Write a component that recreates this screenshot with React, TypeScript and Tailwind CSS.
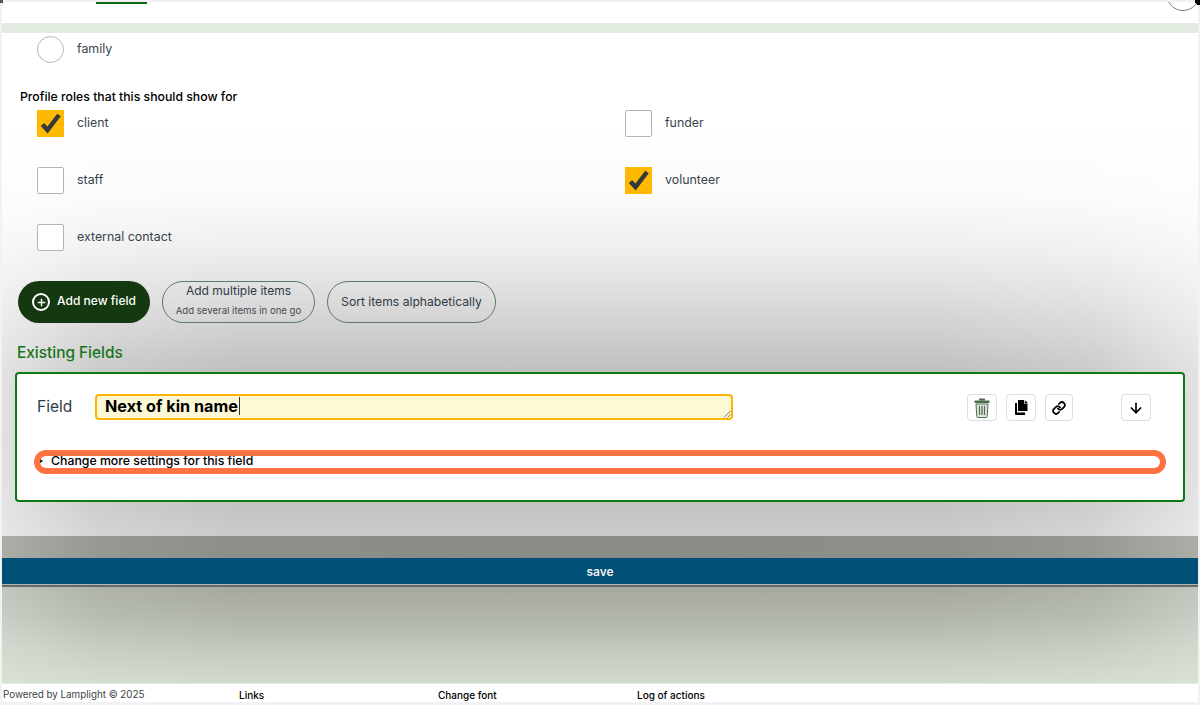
import React from 'react';
import { ArrowDown, Link, Plus } from 'lucide-react';

const TrashIcon = () => (
  <svg width="16" height="20" viewBox="0 0 16 20" fill="none">
    <rect x="5" y="0.5" width="6" height="2" fill="#4d6b4d" />
    <rect x="0.5" y="2.5" width="15" height="2.5" rx="0.5" fill="#4d6b4d" />
    <path d="M2 6h12l-0.8 12.5a1 1 0 0 1-1 1H3.800a1 1 0 0 1-1-1z" fill="#dfe6df" stroke="#4d6b4d" strokeWidth="1" />
    <path d="M5.500 8v9M8 8v9M10.500 8v9" stroke="#4d6b4d" strokeWidth="1.2" />
  </svg>
);

const CopyIcon = () => (
  <svg width="13" height="15" viewBox="0 0 13 15" fill="#000">
    <path d="M3 0h6v3.500h3.500V11H3z" />
    <path d="M9.800 0.200L12.800 3H9.800z" />
    <path d="M0 3h2v9.500h8V15H1a1 1 0 0 1-1-1z" />
  </svg>
);

const CheckMark = () => (
  <svg width="27" height="27" viewBox="0 0 27 27" fill="none">
    <path d="M5.500 14.500l5 5.500L22 5" stroke="#33383d" strokeWidth="4.500" />
  </svg>
);

function Choice({ label, checked, round }: { label: string; checked?: boolean; round?: boolean }) {
  return (
    <div className="flex h-[27px] items-center gap-[13px]">
      {checked ? (
        <span className="h-[27px] w-[27px] bg-[#ffb900]">
          <CheckMark />
        </span>
      ) : (
        <span className={`h-[27px] w-[27px] border border-[#b5b5b5] bg-white ${round ? 'rounded-full' : 'rounded-[2px]'}`} />
      )}
      <span className="text-[12.4px] text-[#39434d]">{label}</span>
    </div>
  );
}

function IconButton({ className, children }: { className: string; children: React.ReactNode }) {
  return (
    <button className={`flex h-[27px] items-center justify-center rounded-[4px] border border-[#dddddd] bg-white ${className}`}>
      {children}
    </button>
  );
}

export default function App() {
  return (
    <div className="relative h-[705px] overflow-hidden bg-[#f1f1f6] px-[2px] pt-[2px] font-['Inter',sans-serif] text-black">
      {/* Screenshot corners */}
      <span className="absolute right-0 top-0 h-[5px] w-[5px] bg-black" />
      <span className="absolute left-0 top-0 h-[3px] w-[3px] bg-[#555555]" />

      {/* Top bar */}
      <div className="relative h-[21px] overflow-hidden rounded-t-[6px] bg-white">
        <div className="ml-[94px] h-[2px] w-[51px] bg-[#0a6e0a]" />
        <div className="absolute right-[-2px] top-[-25px] h-[34px] w-[34px] rounded-full border border-[#6d8a75] bg-white" />
      </div>
      <div className="h-[10px] bg-[#e3ece0]" />

      {/* Form area */}
      <div className="h-[503px] bg-[linear-gradient(to_right,rgba(255,255,255,0.55)_0%,rgba(255,255,255,0.18)_8%,rgba(255,255,255,0)_20%,rgba(255,255,255,0)_78%,rgba(255,255,255,0.18)_91%,rgba(255,255,255,0.55)_100%),linear-gradient(to_bottom,#ffffff_0%,#ffffff_19%,#fafafa_33%,#eeeeee_43%,#dcdcdc_53%,#cccccc_61%,#c0c0c0_67%,#bababa_81%,#c3c3c3_94%,#cbcbcb_100%)] pt-[3px]">
        <div className="pl-[35px]">
          <Choice label="family" round />
        </div>
        <div className="mt-[27px] pl-[18px] text-[12.25px] font-medium leading-[14px]">Profile roles that this should show for</div>
        <div className="mt-[6px] grid w-[1161px] grid-cols-[588px_1fr] gap-y-[30px] pl-[35px]">
          <Choice label="client" checked />
          <Choice label="funder" />
          <Choice label="staff" />
          <Choice label="volunteer" checked />
          <Choice label="external contact" />
        </div>

        {/* Actions */}
        <div className="mt-[30px] flex gap-3 pl-[16px]">
          <button className="flex h-[42px] w-[132px] items-center justify-center gap-[7px] rounded-[21px] bg-[#14380f] text-[12px] font-medium text-white">
            <span className="flex h-[18px] w-[18px] items-center justify-center rounded-full border-2 border-white">
              <Plus size={11} strokeWidth={3} />
            </span>
            <span className="mt-[-3px]">Add new field</span>
          </button>
          <button className="flex h-[42px] w-[153px] flex-col items-center rounded-[21px] border border-[#5f7a65] text-[#2f3a45]">
            <span className="text-[12px] leading-[18px]">Add multiple items</span>
            <span className="mt-[4px] text-[9.6px] leading-[14px] text-[#444b52]">Add several items in one go</span>
          </button>
          <button className="h-[42px] w-[169px] rounded-[21px] border border-[#5f7a65] text-[12.15px] text-[#2f3a45]">
            Sort items alphabetically
          </button>
        </div>

        <h2 className="mt-[21px] pl-[15px] text-[15.4px] font-medium leading-[18px] text-[#17751a]">Existing Fields</h2>

        {/* Field card */}
        <div className="relative ml-[13px] mt-[10px] h-[130px] w-[1170px] rounded-[4px] border-2 border-[#0f7a0f] bg-white">
          <div className="flex items-start pt-[20px]">
            <span className="ml-[20px] w-[58px] pt-[3px] text-[15.5px] leading-[20px] text-[#2f3a45]">Field</span>
            <div className="relative flex h-[26px] w-[638px] items-center rounded-[4px] border-2 border-[#ffb400] bg-[#fdf8d5] pb-[2px] pl-[8px] text-[16.2px] font-bold leading-none">
              Next of kin name<span className="ml-[1px] h-[18px] w-px bg-[#333]" />
              <svg width="8" height="8" viewBox="0 0 8 8" className="absolute bottom-0 right-0">
                <path d="M7.500 1L1 7.500M7.500 4.500L4.500 7.500" stroke="#777" strokeWidth="1" />
              </svg>
            </div>
            <IconButton className="ml-[234px] w-[30px]"><TrashIcon /></IconButton>
            <IconButton className="ml-[9px] w-[30px]"><CopyIcon /></IconButton>
            <IconButton className="ml-[9px] w-[28px]"><Link size={14} strokeWidth={3} /></IconButton>
            <IconButton className="ml-[48px] w-[30px]"><ArrowDown size={16} strokeWidth={2.5} /></IconButton>
          </div>
          <div className="mt-[33px] flex items-center pl-[23px] text-[12.3px] font-medium leading-[14px]">
            <span className="mr-[8px] h-0 w-0 border-y-[2px] border-l-[3px] border-y-transparent border-l-black" />
            Change more settings for this field
          </div>
          {/* Highlight ring */}
          <div className="absolute left-[17px] top-[76px] h-[24px] w-[1132px] rounded-full border-[6px] border-[#ff7343]" />
        </div>
      </div>

      {/* Save */}
      <div className="h-[22px] bg-[linear-gradient(to_right,#abaea6_0%,#969991_8%,#8c8f88_20%,#8a8d86_50%,#8c8f88_78%,#969991_91%,#abaea6_100%)]" />
      <div className="flex h-[26px] items-center justify-center bg-[#004f76] pt-[1px] text-[12px] font-semibold text-[#eeeeee]">save</div>
      <div className="h-[1px] bg-[#b4b8b4]" />
      <div className="h-[2px] bg-[#666a66]" />

      {/* Lower band */}
      <div className="h-[96px] bg-[linear-gradient(to_right,rgba(227,236,224,0.45)_0%,rgba(227,236,224,0.15)_8%,rgba(227,236,224,0)_20%,rgba(227,236,224,0)_78%,rgba(227,236,224,0.15)_91%,rgba(227,236,224,0.45)_100%),linear-gradient(to_bottom,#a5a89e_0%,#b0b4aa_30%,#c3c9be_65%,#d2dacf_100%)]" />
      <div className="h-[1px] bg-[#e3ece0]" />

      {/* Footer */}
      <footer className="grid h-[18px] grid-cols-[236px_199px_199px_1fr] items-center bg-white pl-[1px] pt-[4px] text-[10px] leading-[12px]">
        <span className="text-[9.8px] text-[#3a3f44]">Powered by Lamplight © 2025</span>
        <span className="font-medium">Links</span>
        <span className="font-medium">Change font</span>
        <span className="font-medium">Log of actions</span>
      </footer>
    </div>
  );
}
